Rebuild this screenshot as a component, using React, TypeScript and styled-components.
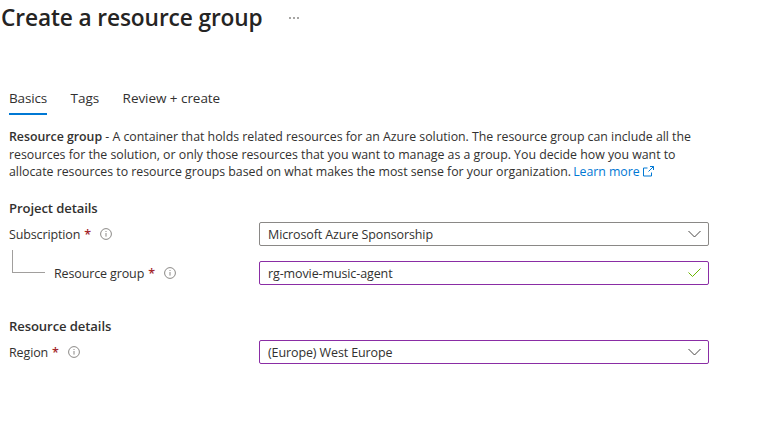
import React from "react";
import styled, { createGlobalStyle } from "styled-components";

const Global = createGlobalStyle`
  html, body { margin: 0; padding: 0; background: #fff; }
  body { font-family: "Open Sans", "Noto Sans", sans-serif; color: #323130; }
`;
const Page = styled.div`
  width: 758px; height: 437px; overflow: hidden; display: flex; flex-direction: column;
`;
const Header = styled.header`
  height: 38px; padding-left: 1px; display: flex; align-items: center; gap: 26px;
`;
const Title = styled.h1`
  margin: -2px 0 0; font-size: 22.7px; font-weight: 600; line-height: 38px; color: #252423; letter-spacing: -0.12px;
`;
const More = styled.span`
  display: flex; gap: 2px; margin-top: -3px;
  i { width: 2px; height: 2px; background: #8a8886; display: block; border-radius: 50%; }
`;
const Tabs = styled.nav`
  margin: 50px 0 0 9px; display: flex; gap: 23.5px; height: 27px;
`;
const Tab = styled.div<{ $active?: boolean }>`
  font-size: 13.5px; line-height: 21px; height: 27px; box-sizing: border-box; color: #323130;
  letter-spacing: -0.05px; white-space: nowrap;
  ${(p) => p.$active && "border-bottom: 2px solid #0078d4; font-weight: 500; letter-spacing: -0.15px;"}
`;
const Description = styled.p`
  margin: 13px 0 0 9px; width: 720px; font-size: 12.35px; line-height: 17.5px; letter-spacing: -0.02px; color: #323130;
  b { font-weight: 600; }
`;
const Line = styled.span`
  display: block; white-space: nowrap;
`;
const LearnMore = styled.a`
  color: #0078d4; display: inline-flex; align-items: center; gap: 3px; margin-left: -1px;
  letter-spacing: -0.05px;
`;
const SectionTitle = styled.h2<{ $top: number }>`
  margin: ${(p) => p.$top}px 0 0 9px; font-size: 13.1px; line-height: 18px; font-weight: 600; color: #323130; letter-spacing: -0.1px;
`;
const Row = styled.div<{ $top: number; $indent?: boolean }>`
  margin-top: ${(p) => p.$top}px; display: flex; align-items: center; height: 24px; padding-left: ${(p) => (p.$indent ? 12 : 9)}px;
`;
const Connector = styled.span`
  width: 33px; height: 23px; margin: -22px 9px 0 0; box-sizing: border-box;
  border-left: 1px solid #a19f9d; border-bottom: 1px solid #a19f9d; flex: none;
`;
const Label = styled.label`
  font-size: 12.5px; letter-spacing: -0.13px; display: flex; align-items: center; color: #323130; padding-top: 1px;
`;
const Star = styled.span`
  color: #a4262c; margin-left: 4px; font-weight: 600;
`;
const Info = styled.svg`
  margin-left: 9px; flex: none;
`;
const Spacer = styled.span`
  flex: 1;
`;
const Field = styled.div<{ $accent?: boolean }>`
  width: 450px; height: 24px; margin-right: 49px; box-sizing: border-box; flex: none; border-radius: 2px;
  border: 1px solid ${(p) => (p.$accent ? "#8a2da5" : "#8a8886")};
  display: flex; align-items: center; justify-content: space-between;
  padding: 0 7px 0 8px; font-size: 12.5px; letter-spacing: -0.11px; color: #323130;
`;
const FieldValue = styled.span`
  padding-top: 2px;
`;

const InfoIcon = () => (
  <Info width="12" height="12" viewBox="0 0 12 12" fill="none">
    <circle cx="6" cy="6" r="5.4" stroke="#8a8886" />
    <rect x="5.5" y="5" width="1" height="3.6" fill="#8a8886" />
    <rect x="5.5" y="3" width="1" height="1" fill="#8a8886" />
  </Info>
);
const Chevron = () => (
  <svg width="13" height="8" viewBox="0 0 13 8" fill="none">
    <path d="M.5 1l6 6 6-6" stroke="#484644" />
  </svg>
);
const Check = () => (
  <svg width="13" height="9" viewBox="0 0 13 9" fill="none">
    <path d="M.5 4.5l4 4 8-8" stroke="#6bb700" />
  </svg>
);
const ExternalIcon = () => (
  <svg width="11" height="11" viewBox="0 0 11 11" fill="none" stroke="#0078d4">
    <path d="M4.5 2H.5v8h8V6.5M5.5 5.5l5-5M7 .5h3.5V4" />
  </svg>
);

export default function App() {
  return (
    <Page>
      <Global />
      <Header>
        <Title>Create a resource group</Title>
        <More><i /><i /><i /></More>
      </Header>
      <Tabs>
        <Tab $active>Basics</Tab>
        <Tab>Tags</Tab>
        <Tab>Review + create</Tab>
      </Tabs>
      <Description>
        <Line><b>Resource group</b> - A container that holds related resources for an Azure solution. The resource group can include all the</Line>
        <Line>resources for the solution, or only those resources that you want to manage as a group. You decide how you want to</Line>
        <Line>allocate resources to resource groups based on what makes the most sense for your organization.{" "}
        <LearnMore>Learn more <ExternalIcon /></LearnMore></Line>
      </Description>
      <SectionTitle $top={18}>Project details</SectionTitle>
      <Row $top={5}>
        <Label>Subscription<Star>*</Star><InfoIcon /></Label>
        <Spacer />
        <Field><FieldValue>Microsoft Azure Sponsorship</FieldValue><Chevron /></Field>
      </Row>
      <Row $top={15} $indent>
        <Connector />
        <Label>Resource group<Star>*</Star><InfoIcon /></Label>
        <Spacer />
        <Field $accent><FieldValue>rg-movie-music-agent</FieldValue><Check /></Field>
      </Row>
      <SectionTitle $top={32}>Resource details</SectionTitle>
      <Row $top={5}>
        <Label>Region<Star>*</Star><InfoIcon /></Label>
        <Spacer />
        <Field $accent><FieldValue>(Europe) West Europe</FieldValue><Chevron /></Field>
      </Row>
    </Page>
  );
}
